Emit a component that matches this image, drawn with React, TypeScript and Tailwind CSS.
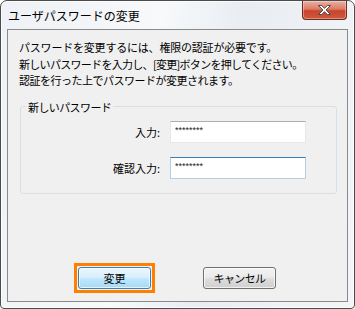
const font = "font-['Noto_Sans_CJK_JP','Noto_Sans',sans-serif]";

function CloseButton() {
  return (
    <div className="relative mr-[7px] flex h-[19px] w-[45px] items-center justify-center rounded-b-[4px] border border-t-0 border-[#6b2b20] bg-[linear-gradient(#eab1a4_0%,#dd7a64_45%,#c8452c_55%,#d0583c_100%)] shadow-[inset_0_0_0_1px_rgba(255,255,255,0.35)]">
      <svg width="15" height="12" viewBox="0 0 15 12">
        <path
          d="M1.5 1.5h3.2l2.8 2.8 2.8-2.8h3.2l-4.4 4.5 4.4 4.5h-3.2l-2.8-2.8-2.8 2.8H1.5l4.4-4.5z"
          fill="#ffffff"
          stroke="#4a4a4a"
          strokeWidth="1"
          strokeLinejoin="round"
        />
      </svg>
    </div>
  );
}

function PasswordRow({ label, focused }: { label: string; focused?: boolean }) {
  return (
    <>
      <span className="text-right text-[11px] leading-[14px] text-black">{label}</span>
      <input
        type="text"
        readOnly
        value="********"
        className={`h-[22px] w-[136px] bg-white pl-[4px] pb-[3px] font-['Liberation_Sans',sans-serif] text-[9px] text-[#222] outline-none ${
          focused
            ? "border border-[#b5cfe7] border-t-[#3d7bad]"
            : "border border-[#e3e9ef] border-t-[#abadb3]"
        }`}
      />
    </>
  );
}

export default function App() {
  return (
    <div
      className={`${font} flex h-[309px] w-[355px] flex-col rounded-t-[7px] rounded-b-[4px] border border-[#4b4b4b] bg-[linear-gradient(100deg,#eef1f5_0%,#f7f9fb_40%,#e9edf2_60%,#f3f5f8_100%)] shadow-[inset_0_0_0_1px_rgba(255,255,255,0.8)]`}
    >
      <div className="flex h-[28px] shrink-0 items-start justify-between">
        <span className="pl-[7px] pt-[7px] text-[12px] leading-[16px] text-black">
          ユーザパスワードの変更
        </span>
        <CloseButton />
      </div>

      <div className="mx-[6px] mb-[6px] flex flex-1 flex-col border border-[#8a8a8a] bg-[#f0f0f0]">
        <div className="pl-[11px] pt-[9px] text-[11px] leading-[16.5px] tracking-[-0.5px] text-black">
          <p className="tracking-[-0.2px]">パスワードを変更するには、権限の認証が必要です。</p>
          <p className="tracking-[-0.7px]">新しいパスワードを入力し、[変更]ボタンを押してください。</p>
          <p>認証を行った上でパスワードが変更されます。</p>
        </div>

        <fieldset className="mt-[11px] ml-[12px] mr-[10px] rounded-[3px] border border-[#d5dfe5] px-0 pt-[7px] pb-[14px]">
          <legend className="ml-[5px] px-[2px] text-[11px] leading-[14px] tracking-[-0.6px] text-black">
            新しいパスワード
          </legend>
          <div className="grid grid-cols-[139px_136px] items-center gap-x-[10px] gap-y-[14px]">
            <PasswordRow label="入力:" />
            <PasswordRow label="確認入力:" focused />
          </div>
        </fieldset>

        <div className="mt-auto flex items-center gap-[48px] pl-[66px] pb-[8px]">
          <div className="border-[3px] border-[#ff8000] p-[1px]">
            <button
              type="button"
              className="block h-[22px] w-[73px] rounded-[3px] border border-[#3c7fb1] bg-[linear-gradient(#eaf6fd_0%,#d9f0fc_45%,#bee6fd_55%,#a7d9f5_100%)] text-[11px] text-black shadow-[inset_0_0_0_1px_rgba(255,255,255,0.7)]"
            >
              変更
            </button>
          </div>
          <button
            type="button"
            className="h-[22px] w-[73px] rounded-[3px] border border-[#707070] bg-[linear-gradient(#f2f2f2_0%,#ebebeb_45%,#dddddd_55%,#cfcfcf_100%)] text-[11px] tracking-[-0.6px] text-black shadow-[inset_0_0_0_1px_rgba(255,255,255,0.7)]"
          >
            キャンセル
          </button>
        </div>
      </div>
    </div>
  );
}
